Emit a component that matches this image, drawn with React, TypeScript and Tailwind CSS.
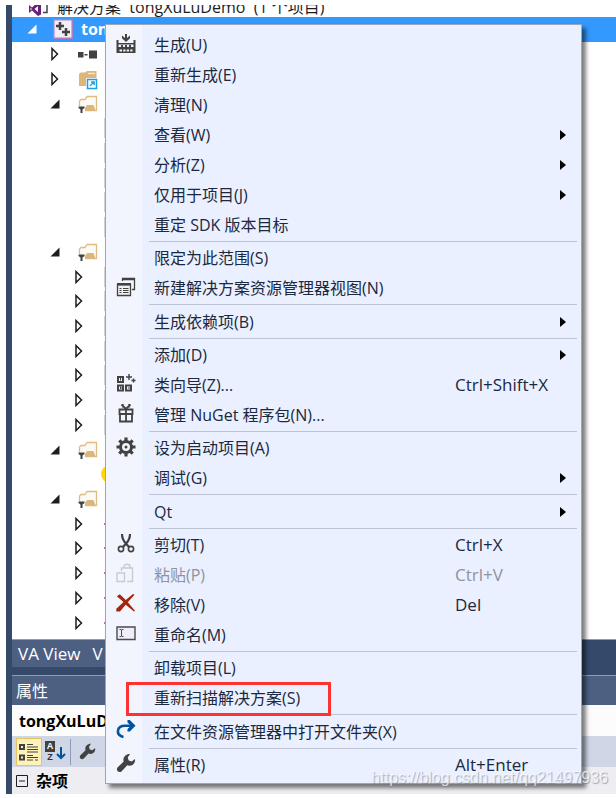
import type { ReactNode } from "react";

type MenuEntry = {
  label: string;
  shortcut?: string;
  icon?: ReactNode;
  submenu?: boolean;
  disabled?: boolean;
  marked?: boolean;
};

type NodeIcon = "refs" | "external" | "filter" | "file" | "source" | "warning";

type TreeNode = {
  level: 1 | 2;
  arrow?: "open" | "closed";
  icon?: NodeIcon;
};

function BuildIcon() {
  return (
    <svg width="20" height="20" viewBox="0 0 20 20" fill="#424242">
      <path d="M9 0h2v4l3-2.500v2.700L10 8 6 4.200V1.500L9 4z" />
      <path fillRule="evenodd" d="M.5 6h2v3h15V6h2v13H.5zM2.500 10.500V13H5v-2h2v2h2v-2h2v2h2v-2h2v2h2.500v-2.500zM3.500 15.500v2H6v-2zm3.700 0v2h2.300v-2zm3.500 0v2H13v-2zm3.500 0v2h2.300v-2z" />
    </svg>
  );
}

function NewViewIcon() {
  return (
    <svg width="20" height="20" viewBox="0 0 20 20" fill="none" stroke="#424242">
      <path d="M6.500 4V1.500h12v11H16M6 2.500h13" strokeWidth="1.300" />
      <path d="M1.500 7.500h13v11h-13z" fill="#f0eff1" strokeWidth="1.300" />
      <path d="M1 6h14v2.500H1z" fill="#424242" stroke="none" />
      <path d="M3.500 11.500h2M7 11.500h5.500M3.500 13.500h2M7 13.500h5.500M3.500 15.500h2M7 15.500h5.500" />
    </svg>
  );
}

function ClassWizardIcon() {
  return (
    <svg width="20" height="20" viewBox="0 0 20 20" fill="none" stroke="#424242">
      <path d="M2 4h5v5H2zM2 12.500h5v5H2zM10 12.500h5v5h-5z" strokeWidth="2" />
      <path d="M4.500 5v2.500M4.500 13.500v2.500M6 15h-1M12 15h3" />
      <path d="M13 1v6M10 4h6M17.500 5.500v4M15.500 7.500h4" strokeWidth="1.400" />
    </svg>
  );
}

function PackageIcon() {
  return (
    <svg width="20" height="20" viewBox="0 0 20 20" fill="none" stroke="#424242">
      <path d="M3.500 6.500h13V11h-13zM4 11v7.500h12V11M10 6v12" strokeWidth="1.800" />
      <path d="M10 6L5.500 1.500M10 6l4.500-4.500M6.800 1v3.500M13.200 1v3.500" strokeWidth="1.800" />
    </svg>
  );
}

function GearIcon() {
  return (
    <svg width="20" height="20" viewBox="0 0 20 20" fill="none" stroke="#424242">
      <circle cx="10" cy="10" r="5.500" strokeWidth="3" />
      <path
        d="M10 .5v4M10 15.500v4M.5 10h4M15.500 10h4M3.300 3.300l2.800 2.800M13.900 13.900l2.800 2.800M3.300 16.700l2.800-2.800M13.900 6.100l2.800-2.800"
        strokeWidth="3.200"
      />
      <circle cx="10" cy="10" r="1.500" fill="#424242" stroke="none" />
    </svg>
  );
}

function CutIcon() {
  return (
    <svg width="20" height="20" viewBox="0 0 20 20" fill="none" stroke="#424242">
      <path d="M6 1c0 4 1.200 6.500 3.500 9l3.500 4M14 1c0 4-1.200 6.500-3.500 9L7 14" strokeWidth="2.200" />
      <circle cx="5" cy="16" r="2.600" strokeWidth="1.600" />
      <circle cx="15" cy="16" r="2.600" strokeWidth="1.600" />
    </svg>
  );
}

function PasteIcon() {
  return (
    <svg width="20" height="20" viewBox="0 0 20 20" fill="none" stroke="#c9cad3" strokeWidth="1.400">
      <path d="M5.500 8V5h11v13.500H11M8 5V3.500C8 .5 14 .5 14 3.500V5" />
      <path d="M1 10h7.500v8.500H1z" />
    </svg>
  );
}

function RemoveIcon() {
  return (
    <svg width="20" height="20" viewBox="0 0 20 20" fill="#a1260d">
      <path d="M.8 3.200L3.800 1.300l6 5.700L17 1l1.500.8-6.700 7.500L19 17.800l-1 .7-8.300-6.800L4 18.500H.3v-2.800L7.500 9z" />
    </svg>
  );
}

function RenameIcon() {
  return (
    <svg width="20" height="20" viewBox="0 0 20 20" fill="none" stroke="#4a4a50">
      <path d="M1 4h18v12.500H1z" fill="#efedf8" strokeWidth="1.400" />
      <path d="M3.500 6.500H5l.5.500.5-.5h1.500M5.500 7v6M3.500 13.500H5l.5-.5.5.500h1.500" />
    </svg>
  );
}

function OpenFolderIcon() {
  return (
    <svg width="20" height="20" viewBox="0 0 20 20" fill="none">
      <path d="M7.500 17C3.500 16 1.500 13.500 2 10.500 2.500 7 5.500 5.700 9 5.700h6" stroke="#00539c" strokeWidth="2.600" />
      <path d="M11.500 0h2.300L19.500 5.700 13.800 11.400h-2.300V9l3.300-3.300-3.300-3.300z" fill="#00539c" />
    </svg>
  );
}

function WrenchIcon({ size = 20 }: { size?: number }) {
  return (
    <svg width={size} height={size} viewBox="0 0 20 20" fill="#424242">
      <path d="M14 1l-2.300 3.600 1 3 3 .8L19 6c.6 3.600-2 6.900-5.600 6.800-.9 0-1.500-.2-2.200-.5l-5.500 5.900C3 20.800-.8 17.200 1.700 14.300l6-5.700C6.400 4.800 9.500.8 14 1z" />
    </svg>
  );
}

const groups: MenuEntry[][] = [
  [
    { label: "生成(U)", icon: <BuildIcon /> },
    { label: "重新生成(E)" },
    { label: "清理(N)" },
    { label: "查看(W)", submenu: true },
    { label: "分析(Z)", submenu: true },
    { label: "仅用于项目(J)", submenu: true },
    { label: "重定 SDK 版本目标" },
  ],
  [
    { label: "限定为此范围(S)" },
    { label: "新建解决方案资源管理器视图(N)", icon: <NewViewIcon /> },
  ],
  [{ label: "生成依赖项(B)", submenu: true }],
  [
    { label: "添加(D)", submenu: true },
    { label: "类向导(Z)...", shortcut: "Ctrl+Shift+X", icon: <ClassWizardIcon /> },
    { label: "管理 NuGet 程序包(N)...", icon: <PackageIcon /> },
  ],
  [
    { label: "设为启动项目(A)", icon: <GearIcon /> },
    { label: "调试(G)", submenu: true },
  ],
  [{ label: "Qt", submenu: true }],
  [
    { label: "剪切(T)", shortcut: "Ctrl+X", icon: <CutIcon /> },
    { label: "粘贴(P)", shortcut: "Ctrl+V", icon: <PasteIcon />, disabled: true },
    { label: "移除(V)", shortcut: "Del", icon: <RemoveIcon /> },
    { label: "重命名(M)", icon: <RenameIcon /> },
  ],
  [{ label: "卸载项目(L)" }, { label: "重新扫描解决方案(S)", marked: true }],
  [{ label: "在文件资源管理器中打开文件夹(X)", icon: <OpenFolderIcon /> }],
  [{ label: "属性(R)", shortcut: "Alt+Enter", icon: <WrenchIcon /> }],
];

const repeat = (count: number, node: TreeNode): TreeNode[] => Array.from({ length: count }, () => node);

const nodes: TreeNode[] = [
  { level: 1, arrow: "closed", icon: "refs" },
  { level: 1, arrow: "closed", icon: "external" },
  { level: 1, arrow: "open", icon: "filter" },
  ...repeat(5, { level: 2, icon: "file" }),
  { level: 1, arrow: "open", icon: "filter" },
  ...repeat(7, { level: 2, arrow: "closed", icon: "file" }),
  { level: 1, arrow: "open", icon: "filter" },
  { level: 2, icon: "warning" },
  { level: 1, arrow: "open", icon: "filter" },
  ...repeat(5, { level: 2, arrow: "closed", icon: "source" }),
];

function Arrow({ kind, color = "#1e1e1e" }: { kind?: "open" | "closed"; color?: string }) {
  return (
    <svg className="shrink-0" width="10" height="14" viewBox="0 0 10 14">
      {kind === "open" && <path d="M9.500 2.500v9H.5z" fill={color} />}
      {kind === "closed" && <path d="M2 1.500L7.500 7 2 12.500z" fill="#fff" stroke={color} strokeWidth="1.500" />}
    </svg>
  );
}

function TreeIcon({ kind }: { kind?: NodeIcon }) {
  return (
    <svg className="shrink-0 overflow-visible" width="20" height="20" viewBox="0 0 20 20">
      {kind === "refs" && <path d="M0 8h5.500v5.500H0zM6.500 10h3v1.500h-3zM11 6.500h8v8h-8z" fill="#424242" />}
      {kind === "external" && (
        <g>
          <path d="M1 17V5l1.500-1.500H7L9 2h9.500v7H8v8z" fill="#dcb67a" />
          <path d="M10 4.500h7" stroke="#f6ead6" strokeWidth="1.300" />
          <path d="M9.500 10.500h9v9h-9z" fill="#fff" stroke="#1ba1e2" strokeWidth="1.500" />
          <path d="M12 17l4-4M13 13h3.200v3.200" fill="none" stroke="#1ba1e2" strokeWidth="1.300" />
        </g>
      )}
      {kind === "filter" && (
        <g>
          <path d="M1.500 12V7L3 5.500h4l2-3h9.500v14H7" fill="#fdfaf5" stroke="#dfbc86" strokeWidth="1.300" />
          <path d="M9 11h6.500l2 5.500H7V14z" fill="#dcb67a" />
          <path d="M.5 12.500h6V14l-2 1.500v3.500h-2v-3.500L.5 14z" fill="#424242" />
        </g>
      )}
      {kind === "file" && <path d="M1 0v20" stroke="#d4d4d4" strokeWidth="2" />}
      {kind === "source" && <path d="M0 9h2v2H0z" fill="#b668b8" />}
      {kind === "warning" && <circle cx="6" cy="10" r="9" fill="#ffd800" />}
    </svg>
  );
}

function SolutionTree() {
  return (
    <div className="bg-white border-b border-[#8e9bbc]">
      <div className="h-3 overflow-hidden flex items-end pl-4 text-[#1e1e1e] whitespace-nowrap">
        <svg className="shrink-0 mr-2" width="21" height="20" viewBox="0 0 21 20">
          <path
            d="M1 8l3 2.500L10 5l3 1.500v11L10 19l-6-5.500L1 16zM10 9l-3.500 3L10 15zM2.500 10.500v3L4 12z"
            fill="#68217a"
            fillRule="evenodd"
          />
          <path d="M15 15.500h4V4" fill="none" stroke="#424242" strokeWidth="1.500" />
        </svg>
        <span>解决方案&nbsp; tongXuLuDemo&nbsp; (1 个项目)</span>
      </div>
      <div className="h-[622px] pb-1 flex flex-col">
        <div className="flex-1 flex items-center bg-[#3399ff] pl-[15px] text-white font-bold">
          <Arrow kind="open" color="#fff" />
          <svg className="ml-4 mr-2 shrink-0" width="20" height="20" viewBox="0 0 20 20">
            <path d="M.8.8h18.400v18.400H.8z" fill="#f3eef6" stroke="#b17fc0" strokeWidth="1.500" />
            <path d="M7 3v8M3 7h8M13 9v8M9 13h8" stroke="#424242" strokeWidth="2.500" />
          </svg>
          <span className="w-6 overflow-hidden">tongXuLuDemo</span>
        </div>
        {nodes.map((node, index) => (
          <div
            key={index}
            className={`flex-1 min-h-0 flex items-center ${node.level === 1 ? "pl-[38px] gap-[18px]" : "pl-[62px] gap-5"}`}
          >
            <Arrow kind={node.arrow} />
            <TreeIcon kind={node.icon} />
          </div>
        ))}
      </div>
    </div>
  );
}

function PropertiesPanel() {
  return (
    <section className="border-t border-[#8e9bbc]">
      <h2 className="h-[29px] pl-1 flex items-center bg-[#4d6082] text-white">属性</h2>
      <div className="h-[31px] pl-[7px] flex items-center bg-[#fcfcfc] text-black font-bold">tongXuLuDemo</div>
      <div className="h-[31px] pl-1 flex items-center bg-[#cfd6e5]">
        <button
          aria-label="按分类顺序"
          className="w-[26px] h-7 flex items-center justify-center bg-[#fff2b8] border border-[#e5c365]"
        >
          <svg className="shrink-0" width="20" height="20" viewBox="0 0 20 20" fill="none" stroke="#424242">
            <path d="M1 3h4v4H1zM1 13.500h4v4H1z" strokeWidth="2" />
            <path d="M8 2.500h6M8 5h11M8 7.500h11M8 10h11M8 13.500h6M8 15.500h11M8 18h6M16 18h3" />
          </svg>
        </button>
        <button aria-label="字母顺序" className="w-7 h-7 flex items-center">
          <span className="w-[10px] ml-[3px] shrink-0 flex flex-col text-[9px] leading-[11px] font-bold text-center text-[#333] font-['Liberation_Sans',sans-serif]">
            <span className="bg-[#424242] text-white">A</span>
            <span>Z</span>
          </span>
          <svg className="shrink-0" width="11" height="20" viewBox="0 0 11 20" fill="none" stroke="#00539c" strokeWidth="2">
            <path d="M6 5v11M2 12l4 4 4-4" />
          </svg>
        </button>
        <span className="w-px h-[26px] bg-[#8e9bbc]" />
        <button aria-label="属性页" className="w-8 h-7 flex items-center justify-center">
          <WrenchIcon size={17} />
        </button>
      </div>
      <div className="h-[27px] pl-1 flex items-center gap-2 bg-[#eeeef2] text-black font-bold">
        <svg width="12" height="12" viewBox="0 0 12 12" fill="none" stroke="#1e1e1e">
          <path d="M.5.5h11v11H.5zM3 6h6" />
        </svg>
        杂项
      </div>
    </section>
  );
}

function MenuItem({ label, shortcut, icon, submenu, disabled, marked }: MenuEntry) {
  return (
    <button
      role="menuitem"
      disabled={disabled}
      className={`relative h-[30px] shrink-0 w-full flex items-center text-left ${disabled ? "text-[#8f939c]" : "text-[#1b293e]"}`}
    >
      <span className="w-9 shrink-0 mr-3 pl-[10px] pb-[3px]">{icon}</span>
      <span className="flex-1 whitespace-nowrap">{label}</span>
      {shortcut && <span className="w-[126px] shrink-0 text-[17px]">{shortcut}</span>}
      {submenu && (
        <svg className="mr-[15px]" width="6" height="10" viewBox="0 0 6 10">
          <path d="M0 0l6 5-6 5z" fill="#000" />
        </svg>
      )}
      {marked && <span className="absolute left-5 -top-px w-[205px] h-[34px] border-3 border-[#ff3232]" />}
    </button>
  );
}

function ContextMenu() {
  return (
    <div
      role="menu"
      className="absolute left-[105px] right-[34px] top-6 h-[760px] pt-[5px] pb-[3px] flex flex-col border border-[#9ba7b7] bg-[linear-gradient(to_right,#f2f4fe_36px,#eaf0ff_36px)] shadow-[4px_4px_4px_rgba(0,0,0,0.5)]"
    >
      {groups.map((group, index) => (
        <div key={index} className="contents">
          {index > 0 && (
            <div className="flex-1 ml-[43px] mr-1 flex items-center">
              <hr className="w-full border-t border-[#bcc3d2]" />
            </div>
          )}
          {group.map((entry) => (
            <MenuItem key={entry.label} {...entry} />
          ))}
        </div>
      ))}
    </div>
  );
}

export default function App() {
  return (
    <main className="relative pt-[5px] pl-[6px] pb-1 bg-white overflow-hidden text-[16px] leading-5 font-['Open_Sans','Noto_Sans_CJK_SC',sans-serif]">
      <div className="pl-[6px] bg-[#35496a]">
        <SolutionTree />
        <div className="h-[27px] mb-2 flex text-[17px] text-white whitespace-nowrap">
          <button className="px-[6px] bg-[#4d6082]">VA View</button>
          <button className="w-20 px-[6px] bg-[#4d6082] text-left">V</button>
        </div>
        <PropertiesPanel />
      </div>
      <ContextMenu />
      <div className="absolute right-2 bottom-[10px] text-base leading-5 text-white/70 [text-shadow:1px_1px_1px_rgba(110,120,140,0.6)] font-['Liberation_Sans',sans-serif]">
        https://blog.csdn.net/qq21497936
      </div>
    </main>
  );
}
